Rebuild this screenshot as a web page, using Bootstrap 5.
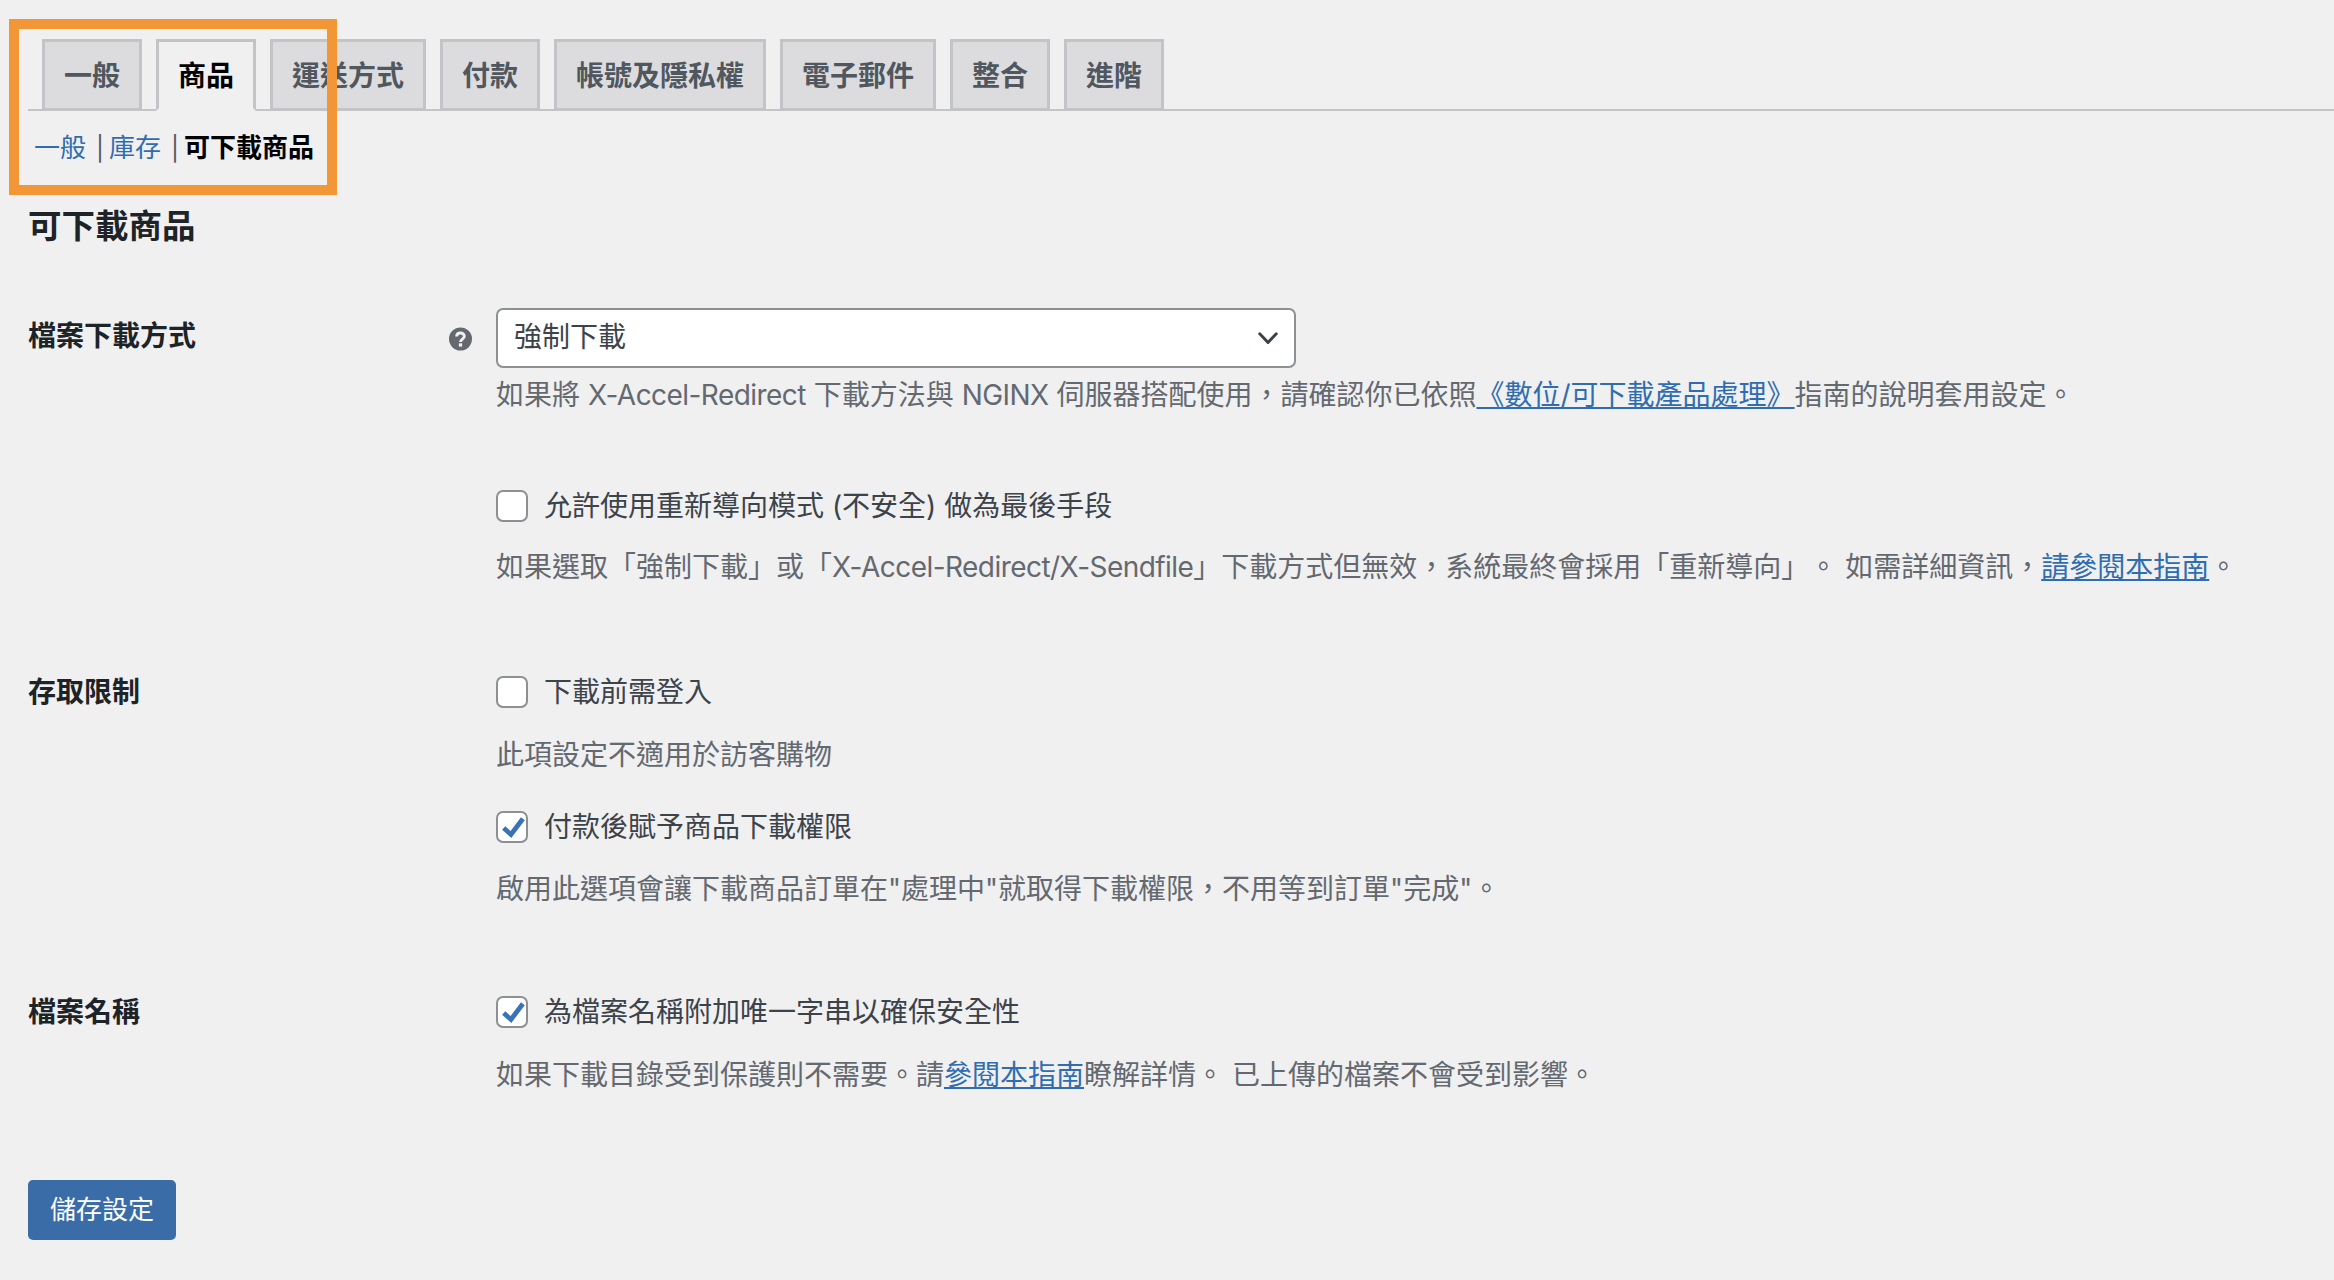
<!DOCTYPE html>
<html lang="zh-Hant">
<head>
<meta charset="utf-8">
<title>可下載商品</title>
<link href="https://cdn.jsdelivr.net/npm/bootstrap@5.3.0/dist/css/bootstrap.min.css" rel="stylesheet">
<style>
html,body{background:#f0f0f1;}
body{font-family:"Inter","Noto Sans CJK TC",sans-serif;font-size:28px;line-height:40px;color:#3c434a;min-height:1280px;text-spacing-trim:space-all;}
.wp-page{position:relative;padding:39px 0 0 28px;}
.wp-tabs{padding-left:14px;gap:14px;border-bottom:2px solid #c3c4c7;flex-wrap:nowrap;}
.wp-tabs .nav-link{margin-bottom:-2px;height:72px;padding:1px 19px 0;display:flex;align-items:center;font-size:28px;font-weight:600;line-height:40px;color:#50575e;background:#dcdcde;border:3px solid #c3c4c7;border-radius:0;}
.wp-tabs .nav-link.active{background:#f0f0f1;color:#000;border-color:#c3c4c7 #c3c4c7 #f0f0f1;}
.wp-sub{margin-top:17px;padding-left:6px;font-size:26px;line-height:40px;color:#50575e;}
.wp-sub a{color:#2f6db0;text-decoration:none;}
.wp-sub b{color:#000;font-weight:600;}
.wp-sub .bar{margin:0 5px 0 10px;font-size:24px;}
.wp-title{margin:33px 0 0;font-size:33.5px;line-height:48px;font-weight:600;color:#1d2327;}
.wp-row{display:flex;}
.wp-left{flex:0 0 468px;display:flex;justify-content:space-between;align-items:flex-start;padding-right:24px;font-weight:600;color:#1d2327;}
.wp-right{flex:1 1 auto;min-width:0;}
.wp-help{flex:none;margin-top:11px;width:23px;height:24px;display:block;}
.row-a{margin-top:58px;}
.row-b{margin-top:85px;}
.row-c{margin-top:83px;}
.wp-label-a{margin-top:8px;}
.wp-select.form-select{width:800px;height:60px;padding:0 16px 2px;font-size:28px;line-height:40px;color:#3c434a;border:2.5px solid #8c8f94;border-radius:7px;background-color:#fff;background-position:right 14px center;background-size:24px 24px;background-image:url("data:image/svg+xml,%3csvg xmlns='http://www.w3.org/2000/svg' viewBox='0 0 16 16'%3e%3cpath fill='none' stroke='%233c434a' stroke-width='2' stroke-linecap='round' stroke-linejoin='round' d='M2.5 5.2 8 11l5.5-5.8'/%3e%3c/svg%3e");}
.wp-desc{margin:0;color:#646970;font-size:28px;line-height:40px;white-space:nowrap;}
.wp-desc a{color:#2f6db0;}
.wp-lat{letter-spacing:-.55px;}
.d-sel{margin-top:7px;}
.d-a{margin-top:21px;}
.d-b{margin-top:23px;}
.d-c{margin-top:22px;}
.wp-check.form-check{display:flex;align-items:center;height:40px;min-height:0;margin-bottom:0;padding:0;}
.wp-check .form-check-input{flex:none;float:none;margin:0 16px 0 0;width:32px;height:32px;background-color:#fff;border:2.5px solid #8c8f94;border-radius:7px;background-size:100% 100%;}
.wp-check .form-check-input:checked{background-color:#fff;border-color:#8c8f94;background-image:url("data:image/svg+xml,%3csvg xmlns='http://www.w3.org/2000/svg' viewBox='0 0 27 27'%3e%3cpath fill='none' stroke='%233a72b5' stroke-width='4.6' d='M5.5 14.5l7 6.2L24 5.5'/%3e%3c/svg%3e");}
.wp-check .form-check-label{color:#3c434a;white-space:nowrap;}
.c-a{margin-top:71px;}
.c-b{margin-top:32px;}
.wp-save.btn{display:block;margin-top:85px;width:148px;height:60px;padding:0;font-size:26px;line-height:40px;color:#fff;background:#3a6da8;border:0;border-radius:5px;}
.wp-callout{position:absolute;left:9px;top:19px;width:328px;height:176px;border:10px solid #f39635;pointer-events:none;}
</style>
</head>
<body>
<div class="wp-page">
  <ul class="nav nav-tabs wp-tabs">
    <li class="nav-item"><a class="nav-link" href="#">一般</a></li>
    <li class="nav-item"><a class="nav-link active" href="#">商品</a></li>
    <li class="nav-item"><a class="nav-link" href="#">運送方式</a></li>
    <li class="nav-item"><a class="nav-link" href="#">付款</a></li>
    <li class="nav-item"><a class="nav-link" href="#">帳號及隱私權</a></li>
    <li class="nav-item"><a class="nav-link" href="#">電子郵件</a></li>
    <li class="nav-item"><a class="nav-link" href="#">整合</a></li>
    <li class="nav-item"><a class="nav-link" href="#">進階</a></li>
  </ul>
  <div class="wp-sub"><a href="#">一般</a><span class="bar">|</span><a href="#">庫存</a><span class="bar">|</span><b>可下載商品</b></div>
  <h2 class="wp-title">可下載商品</h2>

  <div class="wp-row row-a">
    <div class="wp-left wp-label-a"><span>檔案下載方式</span>
      <svg class="wp-help" viewBox="0 0 24 24" aria-hidden="true"><circle cx="12" cy="12" r="12" fill="#646970"/><path fill="none" stroke="#f0f0f1" stroke-width="3" d="M8 9.5c0-2.4 1.8-3.7 4-3.7s4 1.3 4 3.4c0 2.9-4 3-4 5.8"/><rect x="10.3" y="16.5" width="3.4" height="3.4" fill="#f0f0f1"/></svg>
    </div>
    <div class="wp-right">
      <select class="form-select wp-select"><option>強制下載</option></select>
      <p class="wp-desc d-sel">如果將 <span class="wp-lat">X-Accel-Redirect</span> 下載方法與 <span class="wp-lat">NGINX</span> 伺服器搭配使用，請確認你已依照<a href="#">《數位/可下載產品處理》</a>指南的說明套用設定。</p>
      <div class="form-check wp-check c-a"><input class="form-check-input" type="checkbox" id="c1"><label class="form-check-label" for="c1">允許使用重新導向模式 (不安全) 做為最後手段</label></div>
      <p class="wp-desc d-a">如果選取「強制下載」或「<span class="wp-lat">X-Accel-Redirect/X-Sendfile</span>」下載方式但無效，系統最終會採用「重新導向」。 如需詳細資訊，<a href="#">請參閱本指南</a>。</p>
    </div>
  </div>

  <div class="wp-row row-b">
    <div class="wp-left"><span>存取限制</span></div>
    <div class="wp-right">
      <div class="form-check wp-check"><input class="form-check-input" type="checkbox" id="c2"><label class="form-check-label" for="c2">下載前需登入</label></div>
      <p class="wp-desc d-b">此項設定不適用於訪客購物</p>
      <div class="form-check wp-check c-b"><input class="form-check-input" type="checkbox" id="c3" checked><label class="form-check-label" for="c3">付款後賦予商品下載權限</label></div>
      <p class="wp-desc d-c">啟用此選項會讓下載商品訂單在"處理中"就取得下載權限，不用等到訂單"完成"。</p>
    </div>
  </div>

  <div class="wp-row row-c">
    <div class="wp-left"><span>檔案名稱</span></div>
    <div class="wp-right">
      <div class="form-check wp-check"><input class="form-check-input" type="checkbox" id="c4" checked><label class="form-check-label" for="c4">為檔案名稱附加唯一字串以確保安全性</label></div>
      <p class="wp-desc d-b">如果下載目錄受到保護則不需要。請<a href="#">參閱本指南</a>瞭解詳情。 已上傳的檔案不會受到影響。</p>
    </div>
  </div>

  <button type="button" class="btn wp-save">儲存設定</button>
  <div class="wp-callout"></div>
</div>
</body>
</html>
